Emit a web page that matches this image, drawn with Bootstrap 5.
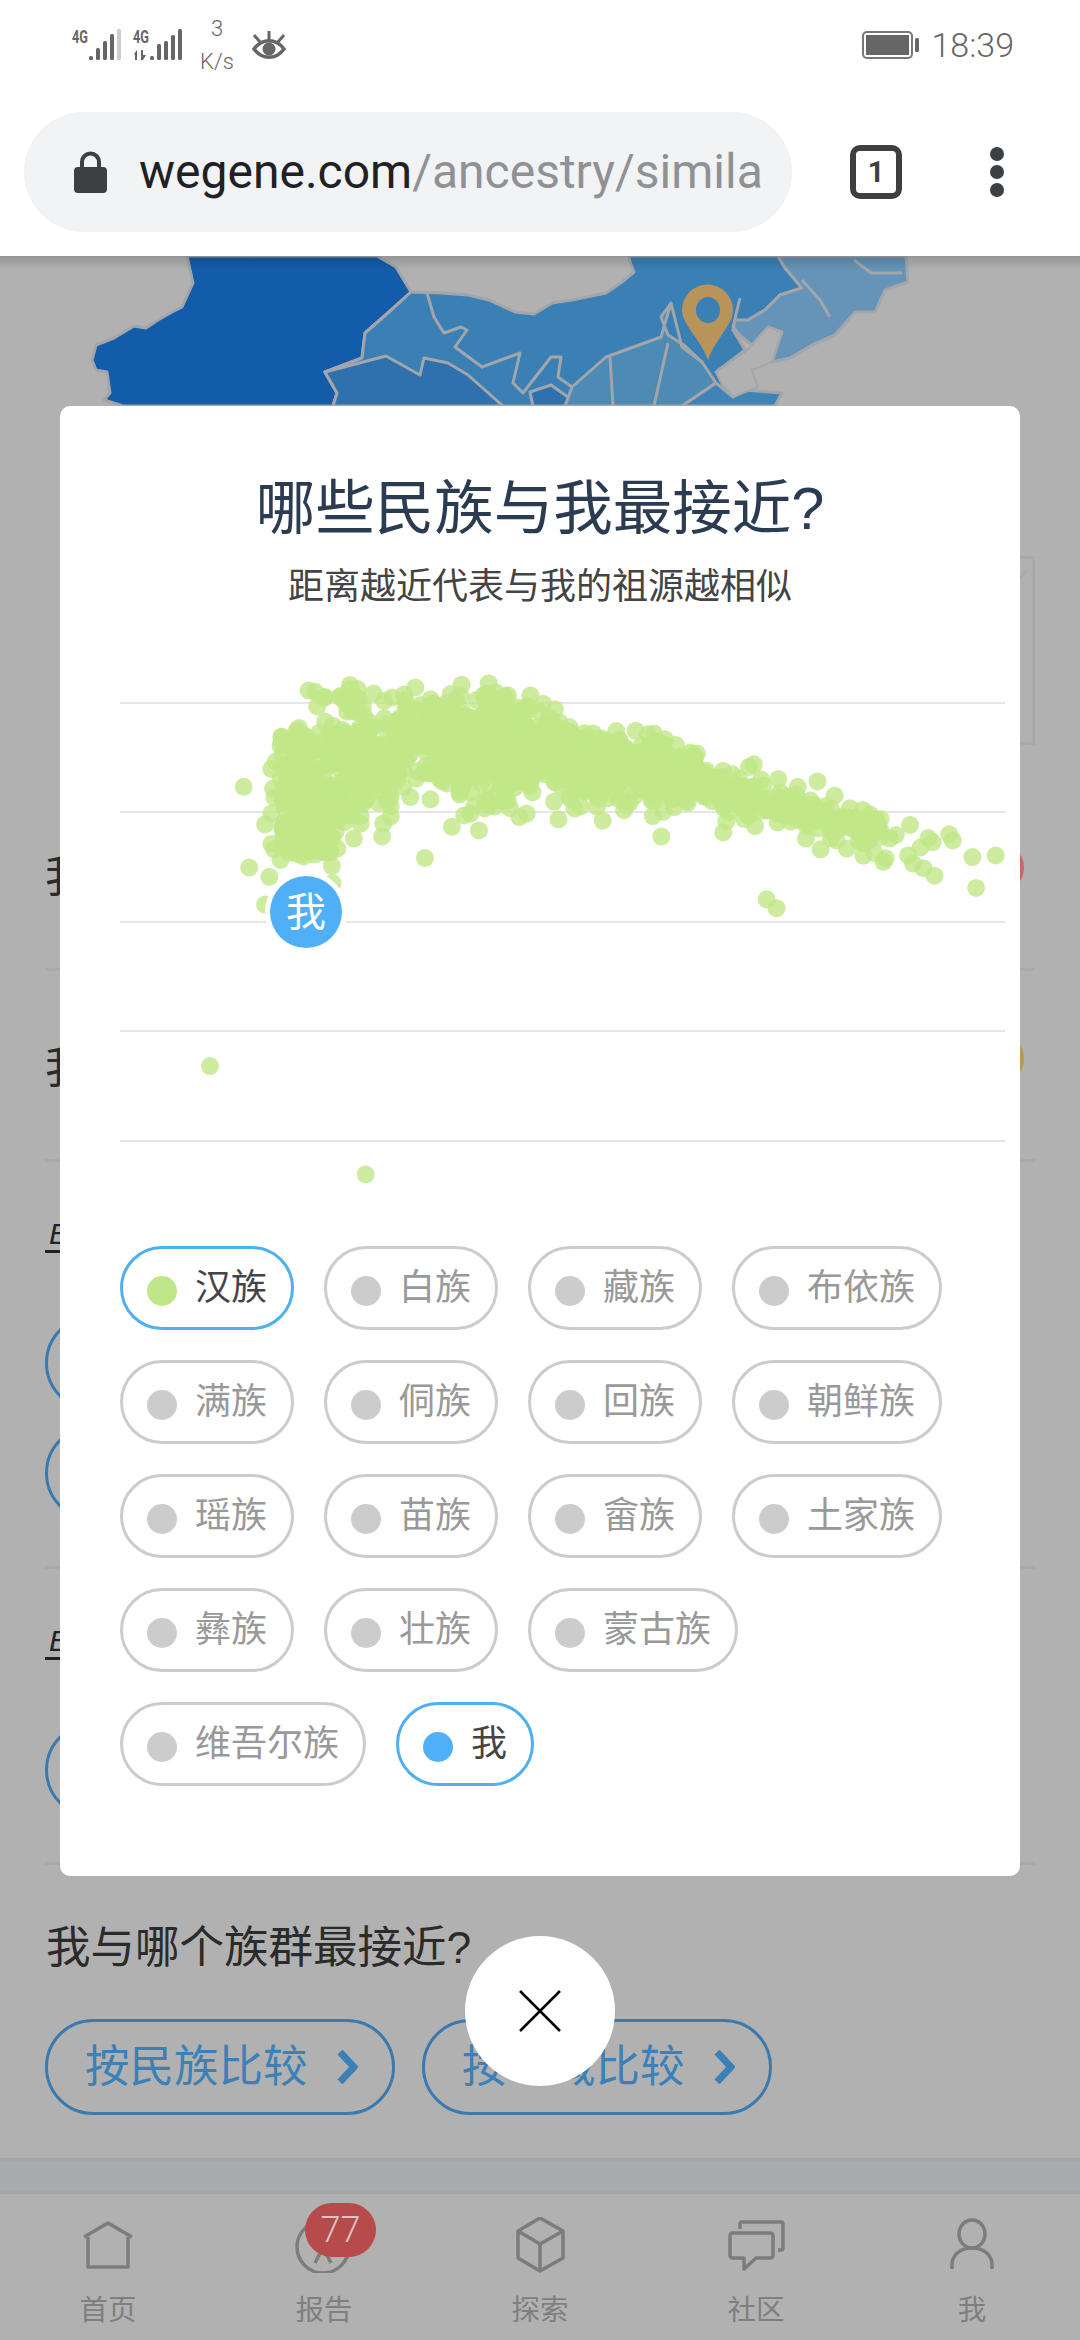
<!DOCTYPE html>
<html lang="zh">
<head>
<meta charset="UTF-8">
<meta name="viewport" content="width=device-width, initial-scale=1.0">
<title>wegene - 民族比较</title>
<link href="https://cdn.jsdelivr.net/npm/bootstrap@5.3.0/dist/css/bootstrap.min.css" rel="stylesheet">
<style>
  body { width: 1080px; height: 2340px; overflow: hidden; background: #b1b1b1; font-family: "Liberation Sans", "Noto Sans CJK SC", sans-serif; color: #2b2b2b; }
  /* phone + browser chrome */
  .phone-status { height: 90px; padding-left: 72px; padding-right: 66px; background: #fff; color: #666; font-family: Roboto, sans-serif; }
  .net-speed { width: 36px; margin-left: 17px; margin-right: 17px; font-size: 22px; line-height: 33px; font-weight: 300; text-align: center; }
  .clock { font-size: 34px; font-weight: 300; margin-left: 12px; }
  .browser-bar { height: 166px; background: #fff; padding-left: 24px; }
  .url-pill { width: 768px; height: 120px; margin-top: 22px; background: #f1f3f4; padding-left: 50px; font-family: Roboto, sans-serif; font-size: 48px; color: #202124; white-space: nowrap; overflow: hidden; }
  .url-pill span { color: #8f9295; }
  .url-pill svg { margin-right: 32px; flex: none; }
  .tab-count { width: 52px; height: 54px; margin-left: 58px; margin-top: 55px; border: 6px solid #3c4043; border-radius: 10px; font: 700 29px Roboto, sans-serif; color: #3c4043; }
  .dots-menu { margin-left: 88px; margin-top: 57px; gap: 4px; }
  .dots-menu i { display: block; width: 14px; height: 14px; border-radius: 50%; background: #3c4043; }

  /* dimmed page under the dialog */
  .page-under { height: 2084px; }
  .top-shade { left: 0; right: 0; top: 0; height: 14px; background: linear-gradient(rgba(0,0,0,.16), rgba(0,0,0,0)); z-index: 1; }
  .map-strip { display: block; filter: blur(.5px); }
  .text-wrap { padding: 0 45px; }
  .side-box { width: 300px; height: 189px; margin-top: 150px; margin-left: auto; border: 3px solid #a9a9a9; margin-bottom: 35px; }
  .side-box svg { margin-left: 281px; margin-top: 10px; display: block; }
  .verdict-row { padding: 75px 0 69px; border-bottom: 3px solid #a9a9a9; font-size: 44px; line-height: 44px; }
  .verdict-dot { width: 53px; height: 53px; margin-right: 11px; margin-top: -14px; border-radius: 50%; background: #c06a6a; }
  .verdict-dot.amber { background: #b8975c; }
  .sub-head { font-style: italic; font-size: 30px; line-height: 44px; padding-top: 50px; width: 200px; color: #222; }
  .sub-head span { display: block; border-bottom: 3px solid #222; padding-left: 4px; height: 41px; }
  .sub-gap { height: 62px; }
  .blue-pill { height: 96px; border: 3px solid #3b7aae; border-radius: 48px; color: #3b80b6; font-size: 44.5px; background: transparent; }
  .pill-stub { width: 300px; margin-bottom: 14px; }
  .under-block { padding-bottom: 31px; border-bottom: 3px solid #a9a9a9; }
  .closest-title { font-size: 44.5px; line-height: 44px; padding-top: 61px; padding-left: 1px; margin-bottom: 49px; }
  .pick-row { gap: 27px; }
  .pick-btn { width: 350px; padding-left: 37px; gap: 28px; }

  /* footer nav */
  .foot-dock { left: 0; right: 0; bottom: 0; }
  .band { height: 36px; border-top: 3px solid #a5a6a8; border-bottom: 3px solid #a5a6a8; background: #aaabad; }
  .tab-nav { height: 146px; padding-top: 23px; }
  .tab-nav .tab-item { width: 216px; color: #7f7f7f; font-size: 28.5px; line-height: 30px; }
  .tab-nav svg { display: block; margin-bottom: 22px; fill: none; stroke: #7c7c7c; stroke-width: 3.5; stroke-linejoin: round; }
  .count-badge { top: -14px; left: 89px; width: 71px; height: 54px; background: #b74a4a; color: #dcc4c4; border-radius: 27px; font: 300 36px/54px Roboto, sans-serif; text-align: center; }

  /* dialog */
  .race-dialog { left: 60px; top: 150px; width: 960px; height: 1470px; background: #fff; border-radius: 10px; z-index: 2; padding-top: 70px; }
  .race-dialog h1 { font-size: 59.5px; line-height: 66px; color: #2a3b52; font-weight: 400; margin: 0 0 23px; text-align: center; }
  .race-dialog .hint { font-size: 36px; line-height: 44px; color: #444; text-align: center; margin: 0 0 51px; }
  .chart-box { display: block; }
  .chips { padding: 26px 40px 0 60px; gap: 30px 30px; }
  .race-chip { height: 84px; border: 3px solid #ccc; border-radius: 42px; padding: 0 24px 0 24px; font-size: 36px; color: #999; gap: 18px; white-space: nowrap; }
  .race-chip i { display: block; width: 30px; height: 30px; border-radius: 50%; background: #ccc; margin-top: 6px; }
  .race-chip.on { border-color: #4fb0f0; color: #444; }
  .race-chip.on i.han { background: #c0e787; }
  .race-chip.on i.me { background: #4fb0f8; }
  .close-round { left: 465px; top: 1680px; width: 150px; height: 150px; background: #fff; border: 0; border-radius: 50%; z-index: 3; }
</style>
</head>
<body>

<!-- status bar -->
<div class="phone-status d-flex align-items-center">
  <svg width="110" height="40" viewBox="72 24 110 40" fill="#666">
    <text x="72" y="42" font-family="Roboto, sans-serif" font-weight="700" font-size="18" textLength="16" lengthAdjust="spacingAndGlyphs">4G</text>
    <rect x="89" y="55" width="4" height="4" rx="1.5"/><rect x="96" y="47" width="4" height="12" rx="1.5"/><rect x="103" y="40" width="4" height="19" rx="1.5"/><rect x="110" y="33" width="4" height="26" rx="1.5"/><rect x="117" y="28" width="4" height="31" rx="1.5" fill="#ccc"/>
    <text x="133" y="42" font-family="Roboto, sans-serif" font-weight="700" font-size="18" textLength="16" lengthAdjust="spacingAndGlyphs">4G</text>
    <path d="M134 53l3-4v10h-2v-5zM141 49h2v5l3 0-3 5h-2z"/>
    <rect x="150" y="55" width="4" height="4" rx="1.5"/><rect x="157" y="43" width="4" height="16" rx="1.5"/><rect x="164" y="40" width="4" height="19" rx="1.5"/><rect x="171" y="34" width="4" height="25" rx="1.5"/><rect x="178" y="28" width="4" height="31" rx="1.5"/>
  </svg>
  <div class="net-speed"><div>3</div><div>K/s</div></div>
  <svg width="34" height="28" viewBox="253 30 34 28" fill="none" stroke="#666" stroke-width="3.5">
    <path d="M255 48c8-11 22-11 30 0c-8 11-22 11-30 0z"/>
    <circle cx="270" cy="48" r="6.5" fill="#666" stroke="none"/>
    <path d="M270 30v9M255 34l6 7M285 34l-6 7" stroke-width="3"/>
  </svg>
  <div class="ms-auto d-flex align-items-center">
    <svg width="57" height="28" viewBox="0 0 57 28">
      <rect x="1" y="1" width="49" height="26" rx="4" fill="none" stroke="#777" stroke-width="2"/>
      <rect x="4" y="4" width="43" height="20" fill="#666"/>
      <rect x="53" y="7" width="4" height="14" rx="1.5" fill="#666"/>
    </svg>
    <div class="clock">18:39</div>
  </div>
</div>

<!-- browser toolbar -->
<div class="browser-bar d-flex align-items-start">
  <div class="url-pill rounded-pill d-flex align-items-center">
    <svg width="33" height="42" viewBox="0 0 33 42"><path d="M8 18v-7a8.500 8.500 0 0 1 17 0v7" fill="none" stroke="#3c4043" stroke-width="4"/><rect x="0" y="16" width="33" height="26" rx="4" fill="#3c4043"/></svg>
    <div>wegene.com<span>/ancestry/simila</span></div>
  </div>
  <div class="tab-count d-flex align-items-center justify-content-center">1</div>
  <div class="dots-menu d-flex flex-column"><i></i><i></i><i></i></div>
</div>

<div class="page-under position-relative">
  <div class="top-shade position-absolute"></div>

  <!-- map, only its top shows above the dialog -->
  <svg class="map-strip" width="1080" height="150" viewBox="0 256 1080 150">
    <g stroke="#a2a6aa" stroke-width="3" stroke-linejoin="round">
      <path fill="#125ca9" d="M187 256L193 283L182 307L172 312L158 320L146 328L134 326L114 338L96 345L92 360L96 370L107 372L110 393L104 400L123 406L333 406L337 393L325 372L362 358L365 333L389 312L411 292L396 267L377 256Z"/>
      <path fill="#3a80b4" d="M411 292L441 293L468 295L489 300L515 312L534 314L552 303L572 300L606 293L622 282L634 272L630 262L629 256L778 256L785 268L802 288L780 295L765 310L748 320L733 330L745 350L716 372L740 406L333 406L337 393L325 372L362 358L365 333L389 312Z"/>
      <path fill="#2f70ae" d="M325 372L386 356L420 375L424 358L448 363L468 375L503 406L333 406L337 393Z"/>
      <path fill="#2f70ae" d="M530 392L551 385L572 400L565 406L533 406Z"/>
      <path fill="#4e8bb4" d="M572 387L606 357L661 337L671 303L661 317L668 335L684 345L702 362L716 383L682 406L565 406Z"/>
      <path fill="#4084b6" d="M716 383L733 397L745 390L782 393L775 406L682 406Z"/>
      <path fill="#6594b8" d="M778 256L906 256L908 282L885 290L875 312L855 312L835 335L812 345L790 358L772 362L782 332L768 327L752 345L733 330L735 320L748 320L765 310L780 295L802 288L785 268Z"/>
      <g fill="none">
        <path d="M427 293L434 317L444 333L461 327L467 330L455 347L482 367L520 353L513 383L523 393L551 357L561 357L558 377L572 387"/>
        <path d="M610 357L613 406M668 343L654 406"/>
        <path d="M671 303L682 347L702 362"/>
        <path d="M740 298L733 327L744 340"/>
        <path d="M802 280L820 300L830 317M854 260L871 273L902 273"/>
      </g>
    </g>
    <path fill="#b1b1b1" stroke="#a2a6aa" stroke-width="2" d="M716 372L745 352L752 345L768 327L782 332L772 362L752 370L758 387L733 397L722 385Z"/>
    <path fill="#b8935a" fill-rule="evenodd" d="M708 360C700 338 682 325 682 310A25.500 25.500 0 0 1 733 310C733 325 716 338 708 360ZM708 297A12 13 0 0 0 708 323A12 13 0 0 0 708 297Z"/>
  </svg>

  <div class="text-wrap">
    <div class="side-box"><svg width="10" height="10" viewBox="0 0 10 10"><path d="M1 9L8 1" stroke="#a9a9a9" stroke-width="3"/></svg></div>

    <div class="verdict-row d-flex justify-content-between align-items-start"><span>我</span><span class="verdict-dot"></span></div>
    <div class="verdict-row d-flex justify-content-between align-items-start"><span>我</span><span class="verdict-dot amber"></span></div>

    <div class="under-block">
      <div class="sub-head"><span>E</span></div>
      <div class="sub-gap"></div>
      <div class="blue-pill pill-stub"></div>
      <div class="blue-pill pill-stub"></div>
    </div>

    <div class="under-block">
      <div class="sub-head"><span>E</span></div>
      <div class="sub-gap"></div>
      <div class="blue-pill pill-stub mb-0"></div>
      <div style="height:13px"></div>
    </div>

    <div class="closest-title">我与哪个族群最接近?</div>
    <div class="pick-row d-flex">
      <a class="blue-pill pick-btn d-flex align-items-center text-decoration-none">按民族比较
        <svg width="22" height="34" viewBox="0 0 22 34"><path d="M4 2L18 17L4 32" fill="none" stroke="#3b80b6" stroke-width="7"/></svg></a>
      <a class="blue-pill pick-btn d-flex align-items-center text-decoration-none">按地域比较
        <svg width="22" height="34" viewBox="0 0 22 34"><path d="M4 2L18 17L4 32" fill="none" stroke="#3b80b6" stroke-width="7"/></svg></a>
    </div>
  </div>

  <!-- dialog -->
  <div class="race-dialog position-absolute">
    <h1>哪些民族与我最接近?</h1>
    <p class="hint">距离越近代表与我的祖源越相似</p>
    <svg id="scatter" class="chart-box" width="960" height="560" viewBox="60 660 960 560">
      <g stroke="#e6e6e6" stroke-width="2">
        <line x1="120" x2="1005" y1="703" y2="703"/>
        <line x1="120" x2="1005" y1="812" y2="812"/>
        <line x1="120" x2="1005" y1="922" y2="922"/>
        <line x1="120" x2="1005" y1="1031" y2="1031"/>
        <line x1="120" x2="1005" y1="1141" y2="1141"/>
      </g>
      <g id="dots" fill="#c0e787" fill-opacity=".8"></g>
      <circle cx="306" cy="912" r="41" fill="#fff"/>
      <circle cx="306" cy="912" r="36" fill="#4fb0f8"/>
      <text x="306" y="926" text-anchor="middle" fill="#fff" font-size="40" font-family="Noto Sans CJK SC, sans-serif">我</text>
    </svg>
    <div class="chips d-flex flex-wrap">
      <div class="race-chip on d-flex align-items-center"><i class="han"></i>汉族</div>
      <div class="race-chip d-flex align-items-center"><i></i>白族</div>
      <div class="race-chip d-flex align-items-center"><i></i>藏族</div>
      <div class="race-chip d-flex align-items-center"><i></i>布依族</div>
      <div class="race-chip d-flex align-items-center"><i></i>满族</div>
      <div class="race-chip d-flex align-items-center"><i></i>侗族</div>
      <div class="race-chip d-flex align-items-center"><i></i>回族</div>
      <div class="race-chip d-flex align-items-center"><i></i>朝鲜族</div>
      <div class="race-chip d-flex align-items-center"><i></i>瑶族</div>
      <div class="race-chip d-flex align-items-center"><i></i>苗族</div>
      <div class="race-chip d-flex align-items-center"><i></i>畲族</div>
      <div class="race-chip d-flex align-items-center"><i></i>土家族</div>
      <div class="race-chip d-flex align-items-center"><i></i>彝族</div>
      <div class="race-chip d-flex align-items-center"><i></i>壮族</div>
      <div class="race-chip d-flex align-items-center"><i></i>蒙古族</div>
      <div class="race-chip d-flex align-items-center"><i></i>维吾尔族</div>
      <div class="race-chip on d-flex align-items-center"><i class="me"></i>我</div>
    </div>
  </div>

  <button class="close-round position-absolute d-flex align-items-center justify-content-center" aria-label="关闭">
    <svg width="42" height="42" viewBox="0 0 42 42"><path d="M1 1L41 41M41 1L1 41" stroke="#000" stroke-width="2.500"/></svg>
  </button>

  <div class="foot-dock position-absolute">
    <div class="band"></div>
    <div class="tab-nav d-flex">
      <div class="tab-item d-flex flex-column align-items-center">
        <svg width="64" height="56" viewBox="0 0 64 56"><path d="M8 20L32 6L56 20M12 20V50H52V20"/></svg>首页
      </div>
      <div class="tab-item d-flex flex-column align-items-center position-relative">
        <svg width="64" height="56" viewBox="0 0 64 56"><circle cx="31" cy="30" r="26"/><path d="M23 46L31 30L39 46"/></svg>报告
        <span class="count-badge position-absolute">77</span>
      </div>
      <div class="tab-item d-flex flex-column align-items-center">
        <svg width="64" height="56" viewBox="0 0 64 56"><path d="M32 1L55 14V41L32 54L10 41V14ZM10 14L32 27L55 14M32 27V54"/></svg>探索
      </div>
      <div class="tab-item d-flex flex-column align-items-center">
        <svg width="64" height="56" viewBox="0 0 64 56"><path d="M16 12V7Q16 5 18 5H57Q59 5 59 7V31Q59 33 57 33H54"/><path d="M9 16H46Q49 16 49 19V38Q49 41 46 41H32L20 52V41H9Q6 41 6 38V19Q6 16 9 16Z"/></svg>社区
      </div>
      <div class="tab-item d-flex flex-column align-items-center">
        <svg width="64" height="56" viewBox="0 0 64 56"><ellipse cx="32" cy="17" rx="13" ry="14"/><path d="M12 52V48C12 38 20 31 32 31C44 31 52 38 52 48V52"/></svg>我
      </div>
    </div>
  </div>
</div>

<script src="https://cdn.jsdelivr.net/npm/bootstrap@5.3.0/dist/js/bootstrap.bundle.min.js"></script>
<script>
  // edge dots read off the chart, in reference zoom units
  var edge = [[406,85],[488,108],[564,112],[605,110],[638,95],[680,112],[705,105],[712,125],[765,140],[808,138],[832,188],[885,220],[940,198],[960,208],[988,222],[1040,262],[1055,310],[1098,320],[1133,292],[1125,300],[1145,335],[1173,333],[1205,355],[1237,340],[1265,380],[1290,415],[1340,445],[1388,462],[1418,498],[1452,488],[1458,505],[1490,552],[1528,547],[1496,638],[1154,670],[1170,695],[1428,604],[1410,583],[1393,570],[1385,547],[1405,525],[1425,510],[1365,490],[1355,500],[1348,555],[1345,565],[1330,540],[1312,548],[1285,528],[1242,530],[1218,500],[1172,455],[1135,465],[1117,445],[1083,483],[1088,452],[1065,395],[1025,400],[1003,412],[985,425],[968,437],[982,494],[886,450],[850,410],[814,446],[762,430],[750,440],[735,415],[710,410],[697,390],[684,477],[670,430],[660,435],[640,467],[596,554],[605,390],[572,384],[540,345],[526,494],[528,458],[540,438],[540,410],[520,400],[500,390],[491,437],[480,500],[453,528],[444,577],[450,480],[432,480],[398,550],[360,560],[350,530],[345,515],[335,460],[345,430],[350,385],[348,360],[300,355],[345,305],[352,285],[360,240],[362,215],[390,190],[420,130],[309,581],[342,607],[245,1137],[499,1440],[335,685],[445,625]];
  // cloud outline: x, top y, bottom y
  var band = [[360,230,370],[420,135,470],[480,125,430],[540,155,335],[620,115,330],[700,125,390],[800,145,345],[860,235,385],[940,215,385],[1040,285,375],[1120,345,425],[1200,385,460],[1280,415,505],[1340,450,495]];
  var seed = 7;
  function rnd() { seed = (seed * 1664525 + 1013904223) % 4294967296; return seed / 4294967296; }
  function range(x) {
    for (var i = 1; i < band.length; i++) {
      if (x <= band[i][0]) {
        var a = band[i - 1], b = band[i], t = (x - a[0]) / (b[0] - a[0]);
        return [a[1] + (b[1] - a[1]) * t, a[2] + (b[2] - a[2]) * t];
      }
    }
    return [450, 500];
  }
  var pts = edge.slice();
  for (var n = 0; n < 1300; n++) {
    var x = 360 + rnd() * 980;
    if (x > 1050 && rnd() > 0.45) continue;
    var r = range(x);
    // softer top and bottom edge than a flat uniform band
    var u = (rnd() + rnd()) / 2;
    var spread = (u - 0.5) * 1.6 + 0.5;
    pts.push([x, r[0] + spread * (r[1] - r[0])]);
  }
  // lower lobe under the main cloud
  for (n = 0; n < 70; n++) {
    pts.push([360 + rnd() * 85, 380 + rnd() * 160]);
  }
  for (n = 0; n < 45; n++) {
    pts.push([365 + rnd() * 55, 440 + rnd() * 105]);
  }
  var g = document.getElementById('dots'), html = '';
  pts.forEach(function (p) {
    html += '<circle cx="' + (60 + p[0] / 1.633).toFixed(1) + '" cy="' + (660 + p[1] / 2.8).toFixed(1) + '" r="9"/>';
  });
  g.innerHTML = html;
</script>
</body>
</html>
